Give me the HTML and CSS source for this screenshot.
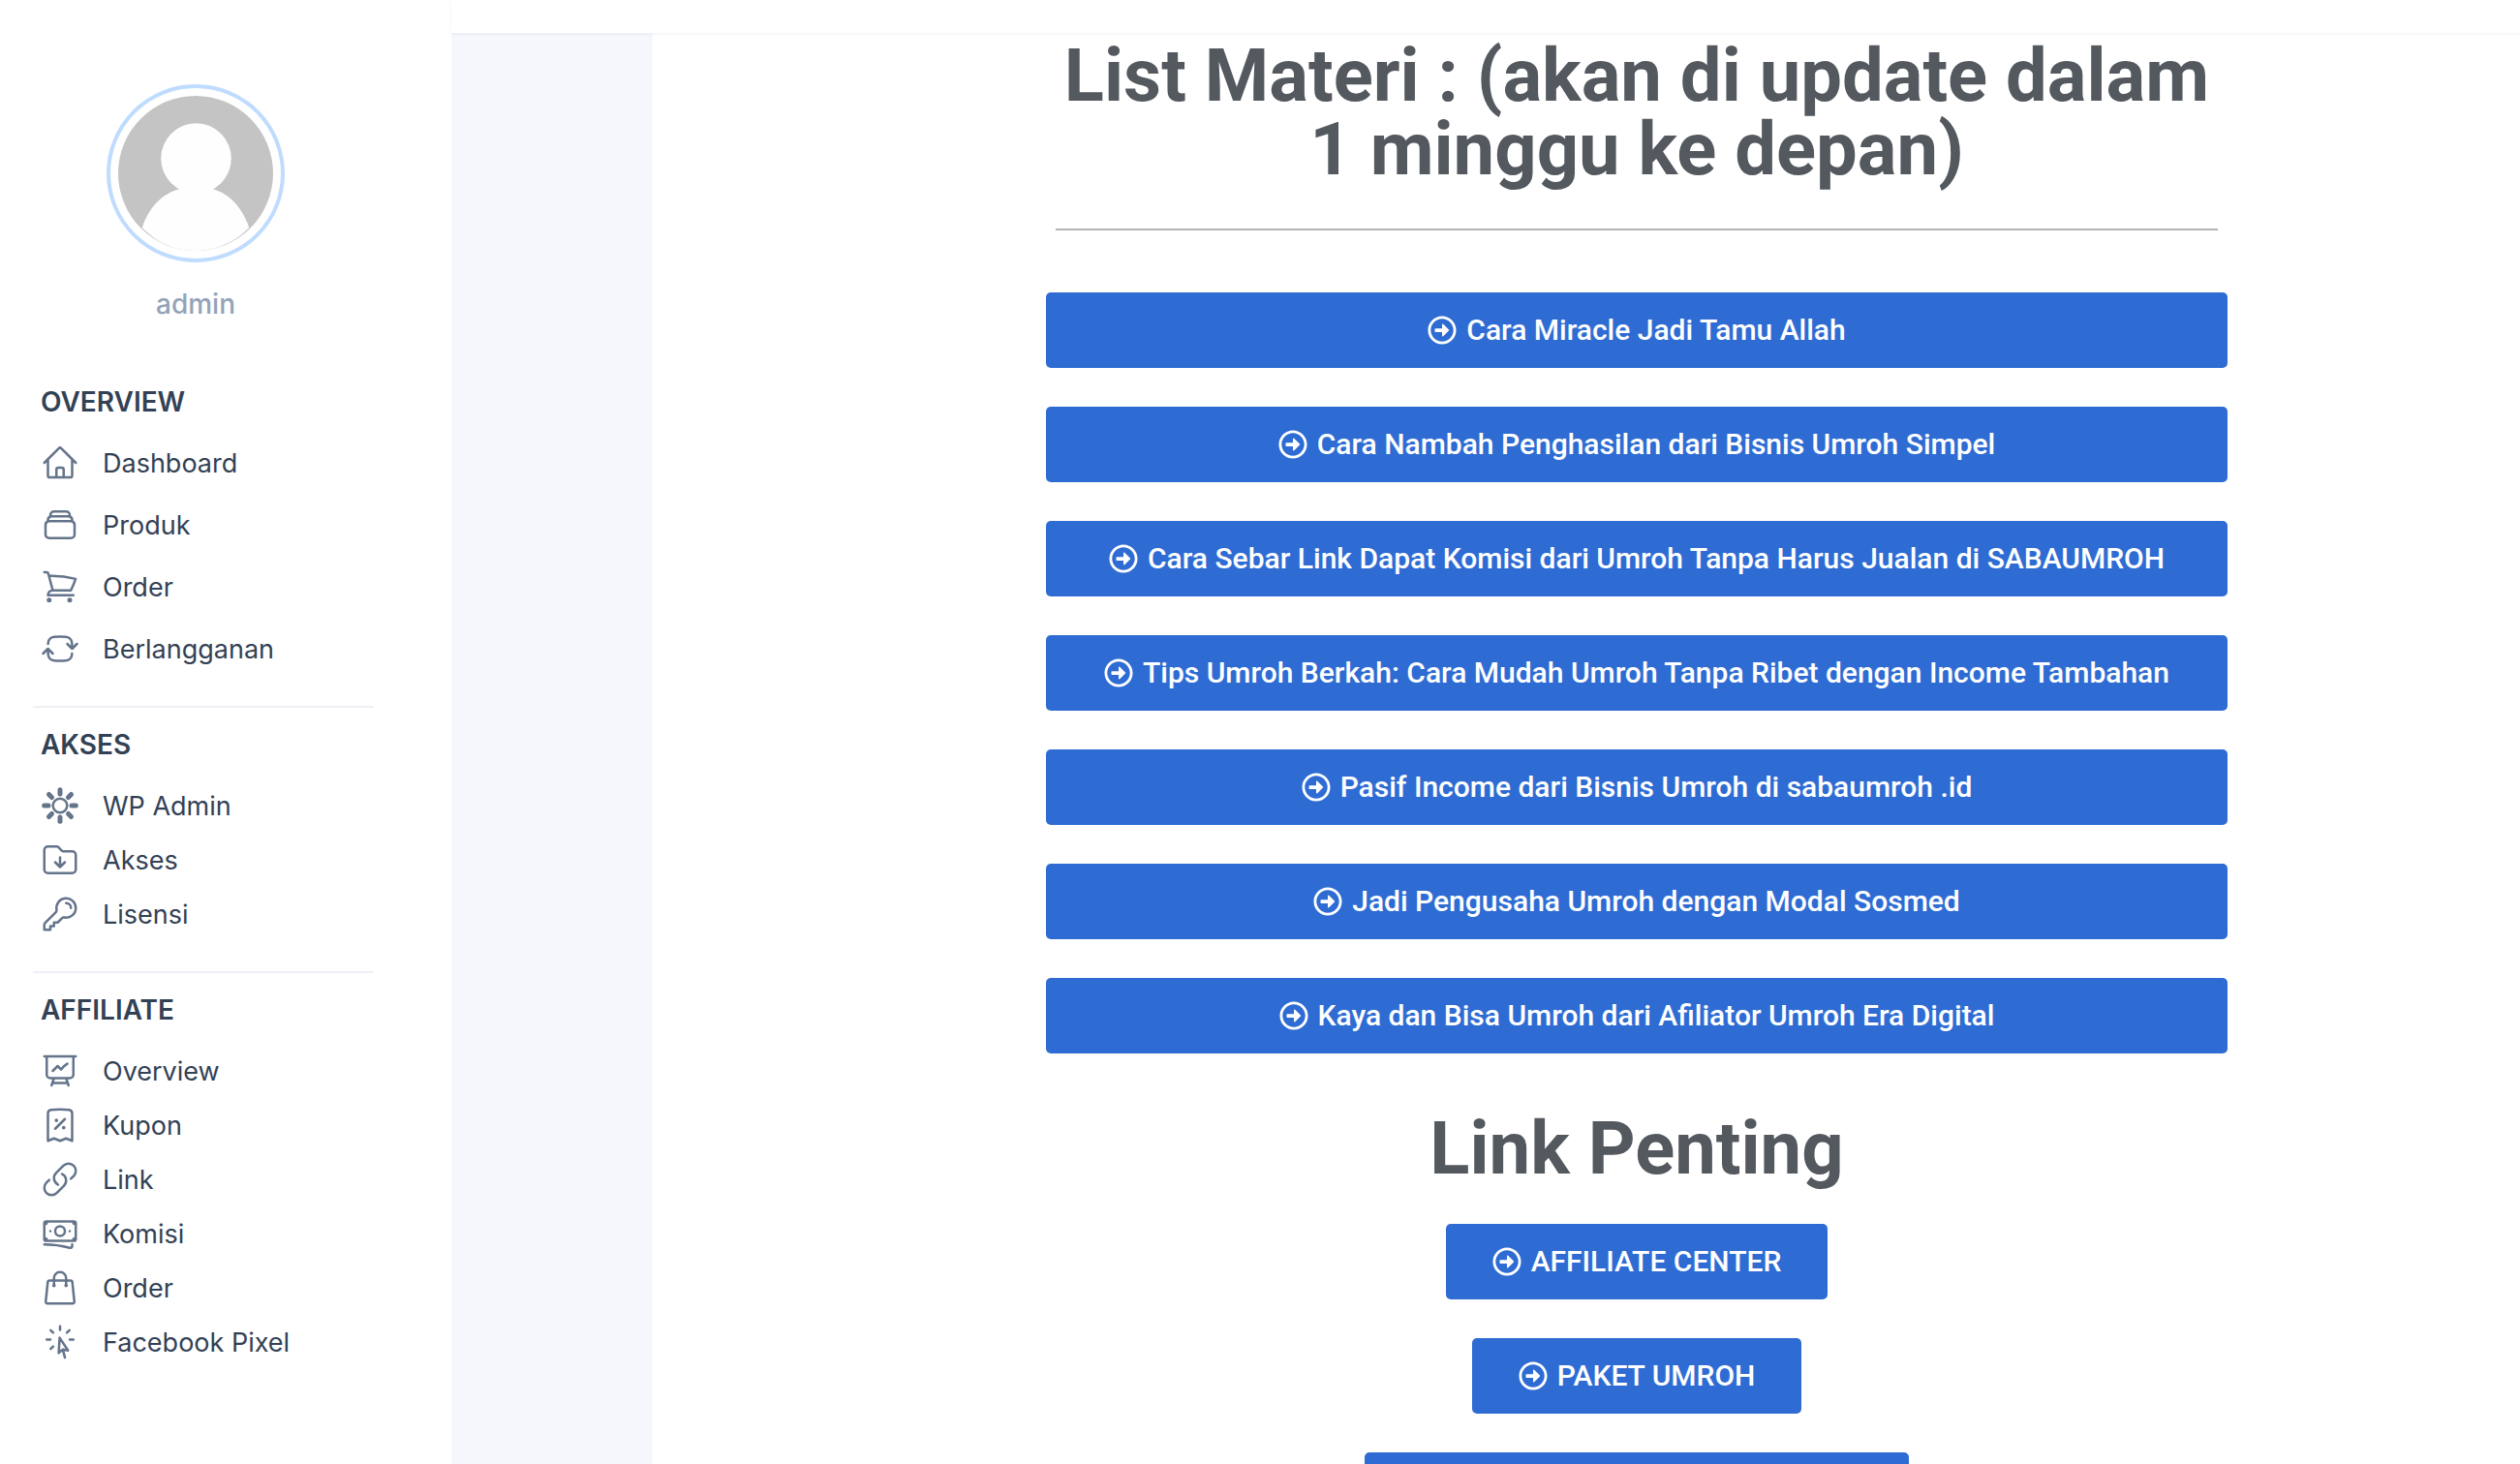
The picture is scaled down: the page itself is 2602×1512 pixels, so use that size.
FILE: index.html
```html
<!DOCTYPE html>
<html lang="en">

<head>
    <meta charset="UTF-8">
    <meta name="viewport" content="width=device-width, initial-scale=1.0">
    <title>List Materi</title>
    <link rel="stylesheet" href="styles.css">
</head>

<body>
    <svg class="defs" xmlns="http://www.w3.org/2000/svg">
        <symbol id="go" viewBox="0 0 512 512">
            <path fill="currentColor" d="M504 256C504 119 393 8 256 8S8 119 8 256s111 248 248 248 248-111 248-248zm-448 0c0-110.5 89.5-200 200-200s200 89.5 200 200-89.5 200-200 200S56 366.5 56 256zm72 20v-40c0-6.6 5.4-12 12-12h116v-67c0-10.7 12.9-16 20.5-8.5l99 99c4.7 4.7 4.7 12.3 0 17l-99 99c-7.6 7.6-20.5 2.2-20.5-8.5v-67H140c-6.6 0-12-5.4-12-12z" />
        </symbol>
    </svg>

    <div class="page">
        <aside class="sidebar">
            <div class="profile">
                <div class="avatar">
                    <svg viewBox="0 0 161 161">
                        <circle cx="80.5" cy="80.5" r="80.5" fill="#c4c4c4" />
                        <circle cx="81" cy="65" r="36.5" fill="#fefefe" />
                        <path fill="#fefefe" d="M63 90 L99 90 L99 97 C 117 102 130 118 136 137 C 122 152 102 161 80 161 C 58 161 40 152 25 137 C 31 118 44 102 63 97 Z" />
                    </svg>
                </div>
                <div class="username">admin</div>
            </div>

            <div class="group group-first">
                <h4>OVERVIEW</h4>
                <a class="item">
                    <svg class="ico" viewBox="0 0 24 24"><path d="M2.25 12l8.954-8.955c.44-.439 1.152-.439 1.591 0L21.75 12M4.5 9.75v10.125c0 .621.504 1.125 1.125 1.125H9.75v-4.875c0-.621.504-1.125 1.125-1.125h2.25c.621 0 1.125.504 1.125 1.125V21h4.125c.621 0 1.125-.504 1.125-1.125V9.75M8.25 21h8.25" /></svg>
                    Dashboard
                </a>
                <a class="item">
                    <svg class="ico" viewBox="0 0 24 24"><path d="M6 6.878V6a2.25 2.25 0 012.25-2.25h7.5A2.25 2.25 0 0118 6v.878m-12 0c.235-.083.487-.128.75-.128h10.5c.263 0 .515.045.75.128m-12 0A2.25 2.25 0 004.5 9v.878m13.5-3A2.25 2.25 0 0119.5 9v.878m0 0a2.246 2.246 0 00-.75-.128H5.25c-.263 0-.515.045-.75.128m15 0A2.25 2.25 0 0121 12v6a2.25 2.25 0 01-2.25 2.25H5.25A2.25 2.25 0 013 18v-6c0-.98.626-1.813 1.5-2.122" /></svg>
                    Produk
                </a>
                <a class="item">
                    <svg class="ico" viewBox="0 0 24 24"><path d="M2.25 3h1.386c.51 0 .955.343 1.087.835l.383 1.437M7.5 14.25a3 3 0 00-3 3h15.75m-12.75-3h11.218c1.121-2.3 2.1-4.684 2.924-7.138a60.114 60.114 0 00-16.536-1.84M7.5 14.25L5.106 5.272M6 20.25a.75.75 0 11-1.5 0 .75.75 0 011.5 0zm12.75 0a.75.75 0 11-1.5 0 .75.75 0 011.5 0z" /></svg>
                    Order
                </a>
                <a class="item">
                    <svg class="ico" viewBox="0 0 24 24"><path d="M19.5 12c0-1.232-.046-2.453-.138-3.662a4.006 4.006 0 00-3.7-3.7 48.678 48.678 0 00-7.324 0 4.006 4.006 0 00-3.7 3.7c-.017.22-.032.441-.046.662M19.5 12l3-3m-3 3l-3-3m-12 3c0 1.232.046 2.453.138 3.662a4.006 4.006 0 003.7 3.7 48.656 48.656 0 007.324 0 4.006 4.006 0 003.7-3.7c.017-.22.032-.441.046-.662M4.5 12l3 3m-3-3l-3 3" /></svg>
                    Berlangganan
                </a>
            </div>

            <div class="group">
                <h4>AKSES</h4>
                <a class="item">
                    <svg class="ico" viewBox="0 0 24 24">
                        <circle cx="12" cy="12" r="4.4" />
                        <path class="spokes" d="M12 2.2v2.6M12 19.2v2.6M2.2 12h2.6M19.2 12h2.6M5.1 5.1l1.8 1.8M17.1 17.1l1.8 1.8M5.1 18.9l1.8-1.8M17.1 6.9l1.8-1.8" />
                    </svg>
                    WP Admin
                </a>
                <a class="item">
                    <svg class="ico" viewBox="0 0 24 24"><path d="M9 13.5l3 3m0 0l3-3m-3 3v-6m1.06-4.19l-2.12-2.12a1.5 1.5 0 00-1.061-.44H4.5A2.25 2.25 0 002.25 6v12a2.25 2.25 0 002.25 2.25h15A2.25 2.25 0 0021.75 18V9a2.25 2.25 0 00-2.25-2.25h-5.379a1.5 1.5 0 01-1.06-.44z" /></svg>
                    Akses
                </a>
                <a class="item">
                    <svg class="ico" viewBox="0 0 24 24"><path d="M15.75 5.25a3 3 0 013 3m3 0a6 6 0 01-7.029 5.912c-.563-.097-1.159.026-1.563.43L10.5 17.25H8.25v2.25H6v2.25H2.25v-2.818c0-.597.237-1.17.659-1.591l6.499-6.499c.404-.404.527-1 .43-1.563A6 6 0 1121.75 8.25z" /></svg>
                    Lisensi
                </a>
            </div>

            <div class="group">
                <h4>AFFILIATE</h4>
                <a class="item">
                    <svg class="ico" viewBox="0 0 24 24"><path d="M3.75 3v11.25A2.25 2.25 0 006 16.5h2.25M3.75 3h-1.5m1.5 0h16.5m0 0h1.5m-1.5 0v11.25A2.25 2.25 0 0118 16.5h-2.25m-7.5 0h7.5m-7.5 0l-1 3m8.5-3l1 3m0 0l.5 1.5m-.5-1.5h-9.5m0 0l-.5 1.5m.75-9l3-3 2.148 2.148A12.061 12.061 0 0116.5 7.605" /></svg>
                    Overview
                </a>
                <a class="item">
                    <svg class="ico" viewBox="0 0 24 24"><path d="M9 14.25l6-6m4.5-3.493V21.75l-3.75-1.5-3.75 1.5-3.75-1.5-3.75 1.5V4.757c0-1.108.806-2.057 1.907-2.185a48.507 48.507 0 0111.186 0c1.1.128 1.907 1.077 1.907 2.185zM9.75 9h.008v.008H9.75V9zm.375 0a.375.375 0 11-.75 0 .375.375 0 01.75 0zm4.125 4.5h.008v.008h-.008V13.5zm.375 0a.375.375 0 11-.75 0 .375.375 0 01.75 0z" /></svg>
                    Kupon
                </a>
                <a class="item">
                    <svg class="ico" viewBox="0 0 24 24"><path d="M13.19 8.688a4.5 4.5 0 011.242 7.244l-4.5 4.5a4.5 4.5 0 01-6.364-6.364l1.757-1.757m13.35-.622l1.757-1.757a4.5 4.5 0 00-6.364-6.364l-4.5 4.5a4.5 4.5 0 001.242 7.244" /></svg>
                    Link
                </a>
                <a class="item">
                    <svg class="ico" viewBox="0 0 24 24"><path d="M2.25 18.75a60.07 60.07 0 0115.797 2.101c.727.198 1.453-.342 1.453-1.096V18.75M3.75 4.5v.75A.75.75 0 013 6h-.75m0 0v-.375c0-.621.504-1.125 1.125-1.125H20.25M2.25 6v9m18-10.5v.75c0 .414.336.75.75.75h.75m-1.5-1.5h.375c.621 0 1.125.504 1.125 1.125v9.75c0 .621-.504 1.125-1.125 1.125h-.375m1.5-1.5H21a.75.75 0 00-.75.75v.75m0 0H3.75m0 0h-.375a1.125 1.125 0 01-1.125-1.125V15m1.5 1.5v-.75A.75.75 0 003 15h-.75M15 10.5a3 3 0 11-6 0 3 3 0 016 0zm3 0h.008v.008H18V10.5zm-12 0h.008v.008H6V10.5z" /></svg>
                    Komisi
                </a>
                <a class="item">
                    <svg class="ico" viewBox="0 0 24 24"><path d="M15.75 10.5V6a3.75 3.75 0 10-7.5 0v4.5m11.356-1.993l1.263 12c.07.665-.45 1.243-1.119 1.243H4.25a1.125 1.125 0 01-1.12-1.243l1.264-12A1.125 1.125 0 015.513 7.5h12.974c.576 0 1.059.435 1.119 1.007zM8.625 10.5a.375.375 0 11-.75 0 .375.375 0 01.75 0zm7.5 0a.375.375 0 11-.75 0 .375.375 0 01.75 0z" /></svg>
                    Order
                </a>
                <a class="item">
                    <svg class="ico" viewBox="0 0 24 24"><path d="M15.042 21.672L13.684 16.6m0 0l-2.51 2.225.569-9.47 5.227 7.917-3.286-.672zM12 2.25V4.5m5.834.166l-1.591 1.591M20.25 10.5H18M7.757 14.743l-1.59 1.59M6 10.5H3.75m4.007-4.243l-1.59-1.59" /></svg>
                    Facebook Pixel
                </a>
            </div>
        </aside>

        <div class="main">
            <div class="topbar"></div>
            <div class="wrap">
                <div class="gutter"></div>
                <div class="content">
                    <h2 class="title">List Materi : (akan di update dalam 1 minggu ke depan)</h2>
                    <hr class="line">

                    <div class="links">
                        <a class="btn btn-full"><svg class="go"><use href="#go" /></svg><span>Cara Miracle Jadi Tamu Allah</span></a>
                        <a class="btn btn-full"><svg class="go"><use href="#go" /></svg><span>Cara Nambah Penghasilan dari Bisnis Umroh Simpel</span></a>
                        <a class="btn btn-full"><svg class="go"><use href="#go" /></svg><span>Cara Sebar Link Dapat Komisi dari Umroh Tanpa Harus Jualan di SABAUMROH</span></a>
                        <a class="btn btn-full"><svg class="go"><use href="#go" /></svg><span>Tips Umroh Berkah: Cara Mudah Umroh Tanpa Ribet dengan Income Tambahan</span></a>
                        <a class="btn btn-full"><svg class="go"><use href="#go" /></svg><span>Pasif Income dari Bisnis Umroh di sabaumroh .id</span></a>
                        <a class="btn btn-full"><svg class="go"><use href="#go" /></svg><span>Jadi Pengusaha Umroh dengan Modal Sosmed</span></a>
                        <a class="btn btn-full"><svg class="go"><use href="#go" /></svg><span>Kaya dan Bisa Umroh dari Afiliator Umroh Era Digital</span></a>
                    </div>

                    <h2 class="title title-link">Link Penting</h2>

                    <div class="links">
                        <a class="btn"><svg class="go"><use href="#go" /></svg><span>AFFILIATE CENTER</span></a>
                        <a class="btn"><svg class="go"><use href="#go" /></svg><span>PAKET UMROH</span></a>
                        <a class="btn btn-cut"></a>
                    </div>
                </div>
            </div>
        </div>
    </div>
</body>

</html>
```

FILE: styles.css
```css
* {
    padding: 0;
    margin: 0;
    box-sizing: border-box;
}

html,
body {
    height: 100%;
    overflow: hidden;
    background-color: #fff;
}

.defs {
    display: none;
}

.page {
    display: flex;
    height: 1512px;
    overflow: hidden;
}

/* sidebar */
.sidebar {
    width: 466px;
    flex-shrink: 0;
    padding: 87px 80px 0 34px;
    font-family: Inter, "Liberation Sans", sans-serif;
    background-color: #fff;
}

.profile {
    display: flex;
    flex-direction: column;
    align-items: center;
    padding-right: 16px;
}

.avatar {
    width: 184px;
    height: 184px;
    padding: 8px;
    border: 4px solid #bfdbfe;
    border-radius: 50%;
}

.avatar svg {
    display: block;
    width: 100%;
    height: 100%;
}

.username {
    margin-top: 23px;
    font-size: 28px;
    line-height: 40px;
    font-weight: 500;
    color: #94a3b8;
}

.group {
    padding: 20px 8px 39px;
    border-top: 2px solid #edf0f5;
    display: flex;
    flex-direction: column;
    gap: 16px;
}

.group-first {
    border-top: 0;
    margin-top: 43px;
    gap: 24px;
}

.group h4 {
    font-size: 28px;
    line-height: 36px;
    font-weight: 600;
    color: #334155;
    margin-bottom: 9px;
}

.group-first h4 {
    margin-bottom: 1px;
}

.item {
    display: flex;
    align-items: center;
    gap: 24px;
    height: 40px;
    font-size: 27px;
    color: #334155;
}

.ico {
    width: 40px;
    height: 40px;
    flex-shrink: 0;
    fill: none;
    stroke: #64748b;
    stroke-width: 1.5;
    stroke-linecap: round;
    stroke-linejoin: round;
}

.ico .spokes {
    stroke-width: 3;
}

/* main */
.main {
    flex: 1;
    min-width: 0;
    display: flex;
    flex-direction: column;
}

.topbar {
    height: 34px;
    flex-shrink: 0;
    background-color: #fff;
    box-shadow: 0 1px 4px rgba(30, 40, 80, .06);
    position: relative;
    z-index: 2;
}

.wrap {
    flex: 1;
    display: flex;
}

.gutter {
    width: 208px;
    flex-shrink: 0;
    background-color: #f6f7fc;
}

.content {
    flex: 1;
    padding: 6px 0 0 406px;
    background-color: #fff;
}

.title {
    width: 1220px;
    padding: 0 10px;
    font-family: Roboto, "Liberation Sans", sans-serif;
    font-size: 76px;
    line-height: 76px;
    font-weight: 700;
    text-align: center;
    color: #54595f;
}

.title-link {
    margin: 60px 0 40px;
}

.line {
    width: 1200px;
    margin: 44px 10px 64px;
    border: 0;
    border-top: 2px solid #b5b2b2;
}

.links {
    width: 1220px;
    display: flex;
    flex-direction: column;
    align-items: center;
    gap: 40px;
}

.btn {
    display: flex;
    align-items: center;
    justify-content: center;
    gap: 10px;
    height: 78px;
    flex-shrink: 0;
    padding: 0 48px;
    border-radius: 5px;
    font-family: Roboto, "Liberation Sans", sans-serif;
    font-size: 30px;
    font-weight: 500;
    color: #fff;
    background-color: #2e6cd4;
}

.btn span {
    margin-top: -2px;
}

.btn-full {
    width: 100%;
}

.btn-cut {
    width: 562px;
}

.go {
    width: 30px;
    height: 30px;
    flex-shrink: 0;
    color: #fff;
}
```
